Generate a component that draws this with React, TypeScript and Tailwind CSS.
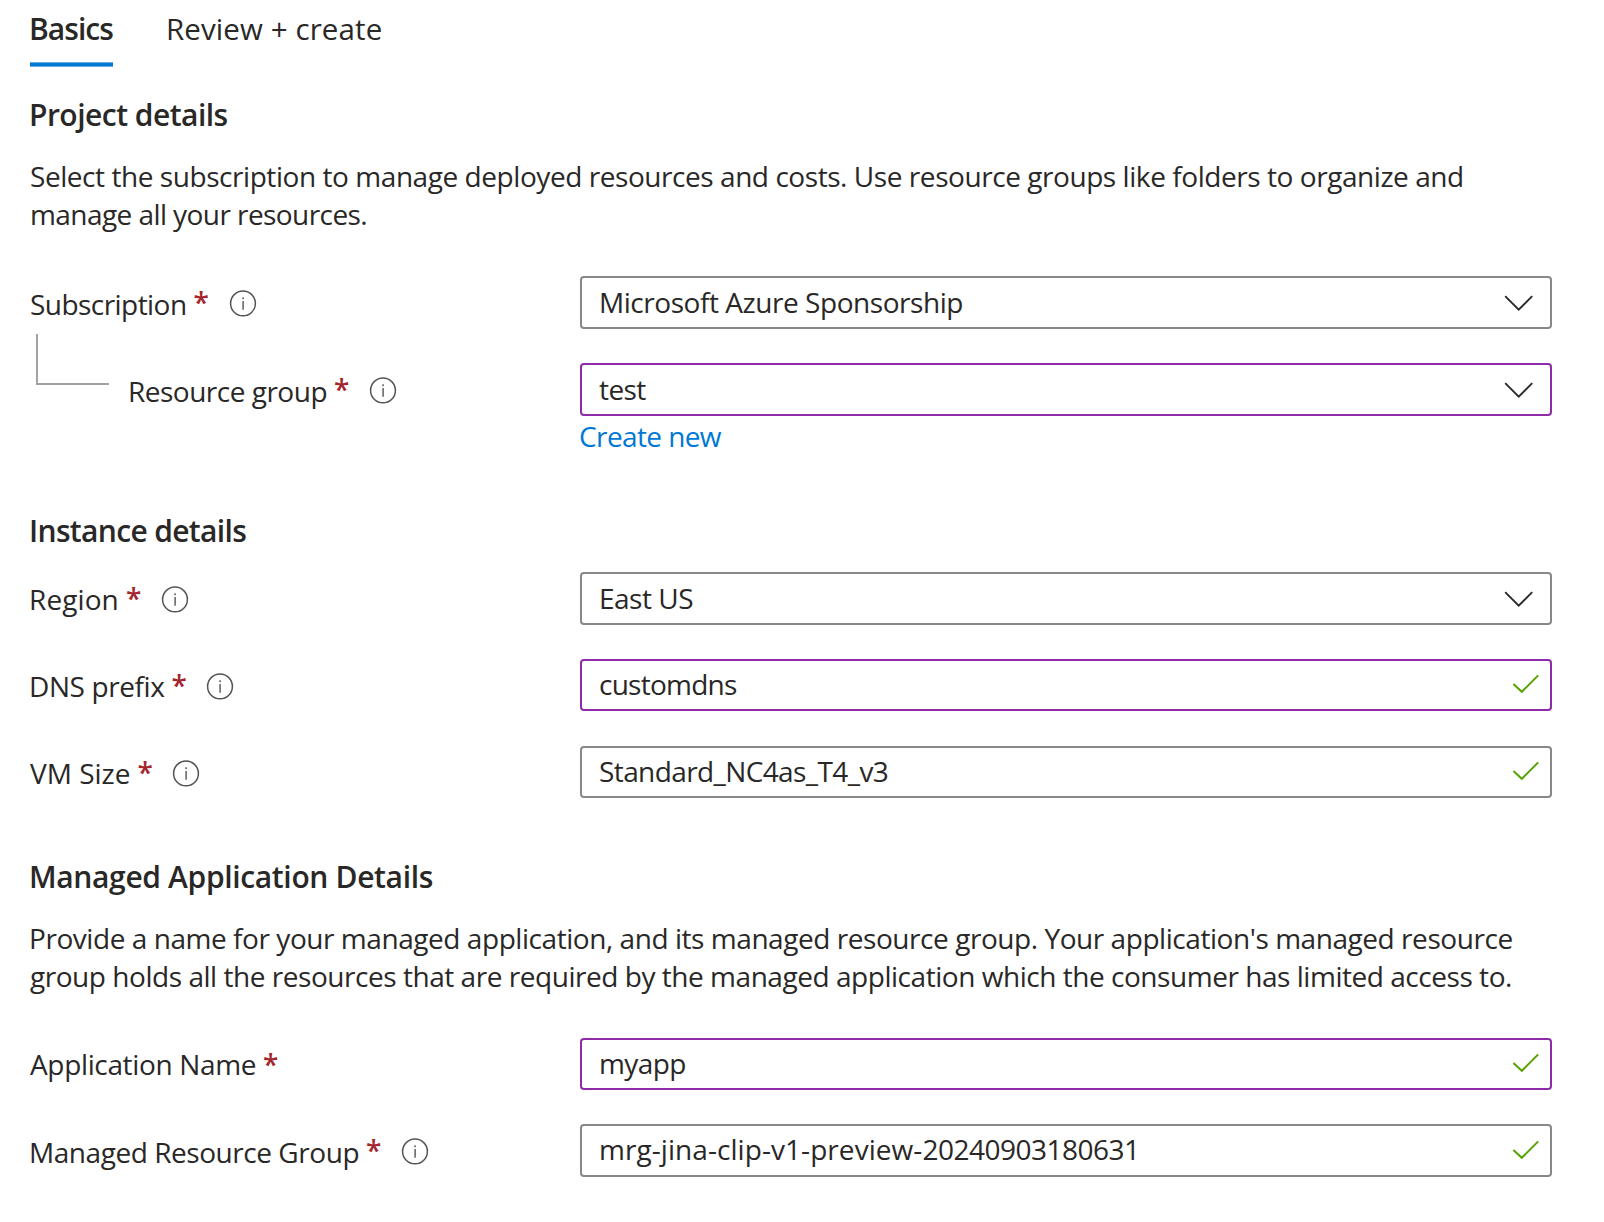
import type { ReactNode } from "react";

function InfoIcon() {
  return (
    <svg className="mt-[13px] ml-[20px] h-7 w-7 shrink-0" viewBox="0 0 28 28" fill="none" stroke="#555453">
      <circle cx="14" cy="14.4" r="12.4" strokeWidth="1.5" />
      <path d="M14.1 11.9V20.8M14.1 8.3V10.3" strokeWidth="1.4" />
    </svg>
  );
}

function Chevron() {
  return (
    <svg className="mr-[16px] h-[18px] w-[30px]" viewBox="0 0 30 18" fill="none" stroke="#292827" strokeWidth="1.9">
      <path d="M1.2 2.2L14.7 15.7L28.2 2.2" />
    </svg>
  );
}

function Check() {
  return (
    <svg className="mr-[10px] mb-[2px] h-[20px] w-[28px]" viewBox="0 0 28 20" fill="none" stroke="#57a300" strokeWidth="2">
      <path d="M1.4 10L9.8 17.8L26.2 1.4" />
    </svg>
  );
}

interface FieldProps {
  label: string;
  labelClass: string;
  value: ReactNode;
  valueClass: string;
  rowClass: string;
  boxClass: string;
  icon: ReactNode;
  info?: boolean;
  nested?: boolean;
}

function Field({ label, labelClass, value, valueClass, rowClass, boxClass, icon, info = true, nested = false }: FieldProps) {
  return (
    <div className={`flex items-start ${rowClass}`}>
      <div className="flex w-[551px] shrink-0 items-start whitespace-nowrap">
        {nested && <div className="-mt-[29px] mr-[19px] ml-[7px] h-[51px] w-[73px] shrink-0 border-b-2 border-l-2 border-[#a3a2a1]" />}
        <span className={`leading-[38px] ${labelClass}`}>{label}</span>
        <span className="mt-[7px] ml-[7px] w-[15px] leading-[38px] font-semibold text-[#a4262c]">*</span>
        {info && <InfoIcon />}
      </div>
      <div className={`flex w-[972px] items-center justify-between rounded-[4px] border-2 bg-white pl-[17px] ${boxClass}`}>
        <span className={`whitespace-nowrap ${valueClass}`}>{value}</span>
        {icon}
      </div>
    </div>
  );
}

const heading = "pt-px text-[30px] leading-10 font-semibold whitespace-nowrap";
const gray = "border-[#8a8886]";
const purple = "border-[#8f2aa8]";

export default function App() {
  return (
    <main className="h-[1222px] w-[1604px] overflow-hidden bg-white pt-[9px] pl-[29px] font-['Open_Sans',sans-serif] text-[28px] text-[#292827]">
      <nav className="flex text-[30px] leading-10 whitespace-nowrap">
        <div className="w-[137px]">
          <div className="h-[53px] font-semibold tracking-[-0.95px]">Basics</div>
          <div className="ml-px h-[5px] w-[83px] border-y border-[#66aee5] bg-[#0078d4]" />
        </div>
        <div className="text-[29.5px] tracking-[0.1px]">Review + create</div>
      </nav>

      <h2 className={`mt-[27px] tracking-[-0.52px] ${heading}`}>Project details</h2>
      <p className="mt-[22px] ml-[1px] leading-[38px] whitespace-nowrap">
        <span className="tracking-[-0.44px]">Select the subscription to manage deployed resources and costs. Use resource groups like folders to organize and</span>
        <br />
        <span className="tracking-[-0.57px]">manage all your resources.</span>
      </p>

      <Field rowClass="mt-[43px]" label="Subscription" labelClass="mt-[9px] ml-[1px] tracking-[-0.55px]" value="Microsoft Azure Sponsorship" valueClass="mb-px tracking-[-0.45px]" boxClass={`h-[53px] ${gray}`} icon={<Chevron />} />
      <Field nested rowClass="mt-[34px]" label="Resource group" labelClass="mt-[9px] tracking-[-0.5px]" value="test" valueClass="mb-px tracking-[-0.6px]" boxClass={`h-[53px] ${purple}`} icon={<Chevron />} />
      <div className="mt-px ml-[550px] leading-[38px] tracking-[-0.6px] text-[#0078d4]">Create new</div>

      <h2 className={`mt-[55px] tracking-[-0.66px] ${heading}`}>Instance details</h2>
      <Field rowClass="mt-[21px]" label="Region" labelClass="mt-[8px] tracking-[0.1px]" value="East US" valueClass="mb-px tracking-[-0.5px]" boxClass={`h-[53px] ${gray}`} icon={<Chevron />} />
      <Field rowClass="mt-[34px]" label="DNS prefix" labelClass="mt-[8px] tracking-[-0.4px]" value="customdns" valueClass="mb-[2px] tracking-[-0.75px]" boxClass={`h-[52px] ${purple}`} icon={<Check />} />
      <Field rowClass="mt-[35px]" label="VM Size" labelClass="mt-[8px] ml-[1px]" value="Standard_NC4as_T4_v3" valueClass="mb-[2px] tracking-[-0.6px]" boxClass={`h-[52px] ${gray}`} icon={<Check />} />

      <h2 className={`mt-[58px] tracking-[-0.35px] ${heading}`}>Managed Application Details</h2>
      <p className="mt-[22px] leading-[38px] whitespace-nowrap">
        <span className="tracking-[-0.445px]">Provide a name for your managed application, and its managed resource group. Your application's managed resource</span>
        <br />
        <span className="ml-px tracking-[-0.46px]">group holds all the resources that are required by the managed application which the consumer has limited access to.</span>
      </p>
      <Field rowClass="mt-[43px]" label="Application Name" labelClass="mt-[7px] ml-[1px] tracking-[-0.35px]" value="myapp" valueClass="mb-[2px] tracking-[-0.6px]" boxClass={`h-[52px] ${purple}`} icon={<Check />} info={false} />
      <Field
        rowClass="mt-[34px]"
        label="Managed Resource Group"
        labelClass="mt-[9px] tracking-[-0.45px]"
        value={<>mrg-jina-clip-v1-preview-<span className="tracking-[-0.5px]">20240903180631</span></>}
        valueClass="mb-[3px] tracking-[0.06px]"
        boxClass={`h-[53px] ${gray}`}
        icon={<Check />}
      />
    </main>
  );
}
